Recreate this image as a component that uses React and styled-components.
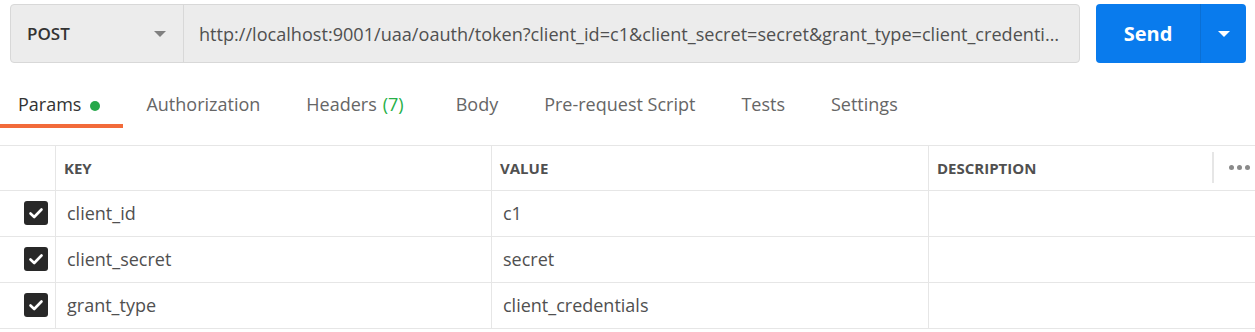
import React from 'react';
import styled, { createGlobalStyle } from 'styled-components';

const GlobalStyle = createGlobalStyle`
  body {
    margin: 0;
    background: #fff;
    font-family: 'Open Sans', 'Noto Sans', sans-serif;
    color: #505050;
  }
`;

const TopBar = styled.div`
  display: flex;
  align-items: stretch;
  gap: 16px;
  padding: 4px 9px 0 10px;
  height: 59px;
`;

const RequestBox = styled.div`
  flex: 1;
  min-width: 0;
  display: flex;
  background: #ececec;
  border: 1px solid #d8d8d8;
  border-radius: 4px;
  box-sizing: border-box;
`;

const Method = styled.div`
  width: 173px;
  flex: none;
  display: flex;
  align-items: center;
  justify-content: space-between;
  padding: 0 17px 0 16px;
  box-sizing: border-box;
  border-right: 1px solid #d8d8d8;
  font-size: 17px;
  font-weight: 600;
  color: #333;
`;

const Caret = styled.span`
  width: 0;
  height: 0;
  border-left: 6px solid transparent;
  border-right: 6px solid transparent;
  border-top: 6px solid ${p => p.$color};
`;

const Url = styled.div`
  flex: 1;
  min-width: 0;
  display: flex;
  align-items: center;
  padding: 0 14px 0 15px;
  font-size: 18.1px;
  color: #505050;
  span {
    overflow: hidden;
    white-space: nowrap;
    text-overflow: ellipsis;
  }
`;

const SendGroup = styled.div`
  width: 150px;
  flex: none;
  display: flex;
  background: #097bed;
  border-radius: 4px;
  color: #fff;
`;

const SendLabel = styled.div`
  flex: 1;
  display: flex;
  align-items: center;
  justify-content: center;
  font-size: 20px;
  font-weight: 700;
  border-right: 1px solid #0a6fd4;
`;

const SendMore = styled.div`
  width: 45px;
  display: flex;
  align-items: center;
  justify-content: center;
`;

const Tabs = styled.div`
  display: flex;
  height: 65px;
  margin-bottom: 17px;
`;

const Tab = styled.div`
  display: flex;
  align-items: flex-start;
  height: 65px;
  box-sizing: border-box;
  padding: 29px 23px 0 ${p => (p.$first ? '18px' : '23px')};
  font-size: 18px;
  color: ${p => (p.$active ? '#333' : '#666')};
  box-shadow: ${p => (p.$active ? 'inset 0 -4px 0 #f26b3a' : 'none')};
  white-space: nowrap;
`;

const Count = styled.span`
  color: #26b047;
  margin: 0 6px 0 6px;
`;

const Dot = styled.span`
  width: 10px;
  height: 10px;
  border-radius: 50%;
  background: #26a84a;
  margin: 9px 0 0 9px;
`;

const Table = styled.div`
  display: grid;
  grid-template-columns: 55px 436px 437px 1fr;
  border-top: 1px solid #e6e6e6;
`;

const Cell = styled.div`
  display: flex;
  align-items: center;
  height: ${p => (p.$head ? '45px' : '46px')};
  box-sizing: border-box;
  border-bottom: 1px solid #e6e6e6;
  border-left: ${p => (p.$first ? 'none' : '1px solid #e6e6e6')};
  padding-left: ${p => (p.$first ? '24px' : '11px')};
  padding-bottom: 1px;
  font-size: 18px;
  color: #505050;
`;

const HeadCell = styled(Cell)`
  font-size: 15px;
  font-weight: 700;
  color: #505050;
  padding-left: 8px;
`;

const DescHead = styled(HeadCell)`
  justify-content: space-between;
  padding-right: 5px;
`;

const MoreWrap = styled.div`
  display: flex;
  align-items: center;
  height: 31px;
  border-left: 2px solid #e6e6e6;
  padding-left: 15px;
  gap: 3px;
`;

const MoreDot = styled.span`
  width: 5px;
  height: 5px;
  border-radius: 50%;
  background: #8a8a8a;
`;

const Check = styled.span`
  width: 24px;
  height: 24px;
  border-radius: 3px;
  background: #282828;
  display: flex;
  align-items: center;
  justify-content: center;
`;

const rows = [
  ['client_id', 'c1'],
  ['client_secret', 'secret'],
  ['grant_type', 'client_credentials'],
];

const CheckBox = () => (
  <Check>
    <svg width="16" height="16" viewBox="0 0 16 16">
      <path d="M2.5 8.5 L6.2 12 L13.5 4.5" fill="none" stroke="#fff" strokeWidth="2.6" strokeLinecap="round" strokeLinejoin="round" />
    </svg>
  </Check>
);

const App = () => {
  return (
    <>
      <GlobalStyle />
      <TopBar>
        <RequestBox>
          <Method>
            POST
            <Caret $color="#808080" />
          </Method>
          <Url>
            <span>http://localhost:9001/uaa/oauth/token?client_id=c1&client_secret=secret&grant_type=client_credentials</span>
          </Url>
        </RequestBox>
        <SendGroup>
          <SendLabel>Send</SendLabel>
          <SendMore>
            <Caret $color="#fff" />
          </SendMore>
        </SendGroup>
      </TopBar>
      <Tabs>
        <Tab $first $active>
          Params<Dot />
        </Tab>
        <Tab>Authorization</Tab>
        <Tab>
          Headers<Count>(7)</Count>
        </Tab>
        <Tab>Body</Tab>
        <Tab>Pre-request Script</Tab>
        <Tab>Tests</Tab>
        <Tab>Settings</Tab>
      </Tabs>
      <Table>
        <HeadCell $head $first />
        <HeadCell $head>KEY</HeadCell>
        <HeadCell $head>VALUE</HeadCell>
        <DescHead $head>
          DESCRIPTION
          <MoreWrap>
            <MoreDot />
            <MoreDot />
            <MoreDot />
          </MoreWrap>
        </DescHead>
        {rows.map(([k, v]) => (
          <React.Fragment key={k}>
            <Cell $first>
              <CheckBox />
            </Cell>
            <Cell>{k}</Cell>
            <Cell>{v}</Cell>
            <Cell />
          </React.Fragment>
        ))}
      </Table>
    </>
  );
};

export default App;
